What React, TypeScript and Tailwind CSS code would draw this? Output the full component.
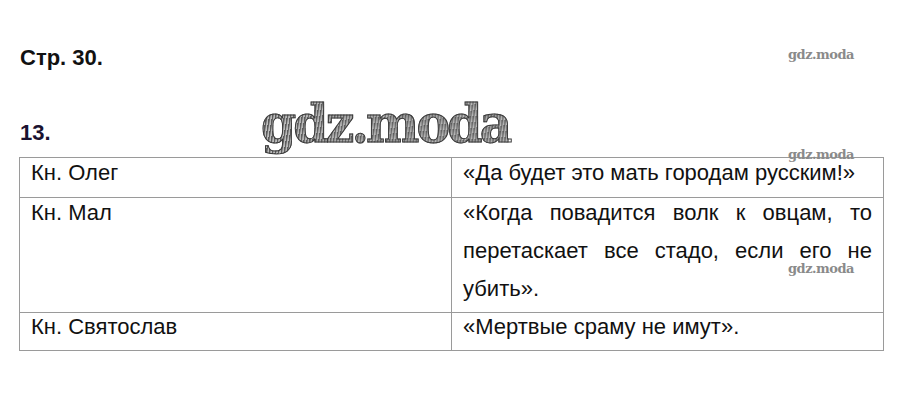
export default function App() {
  const cell = "border border-[#9a9a9a] align-top px-[11px] text-[22px] leading-[38px] text-[#111]";
  const mark = "absolute font-['DejaVu_Serif',serif] font-bold text-[13px] tracking-[-0.5px] text-[#8a8a8a] select-none";

  return (
    <div className="relative w-[897px] h-[402px] bg-white font-['Liberation_Sans',Arial,sans-serif] text-[#111] overflow-hidden">
      <div className="px-[20px] pt-[44px]">
        <p className="text-[22px] font-bold leading-[28px]">Стр. 30.</p>
        <p className="mt-[47px] text-[22px] font-bold leading-[28px] text-[#1a1230]">13.</p>

        <table className="mt-[10px] ml-[-1px] w-[865px] border-collapse table-fixed">
          <colgroup>
            <col className="w-[432px]" />
            <col />
          </colgroup>
          <tbody>
            <tr className="border-b border-b-[#222]">
              <td className={cell}>
                <div className="-mt-[4px] mb-[5px]">Кн. Олег</div>
              </td>
              <td className={cell}>
                <div className="-mt-[4px] mb-[5px]">«Да будет это мать городам русским!»</div>
              </td>
            </tr>
            <tr>
              <td className={cell}>
                <div className="-mt-[4px] mb-[4px]">Кн. Мал</div>
              </td>
              <td className={cell}>
                <div className="-mt-[4px] mb-[4px]">
                  <div className="text-justify [text-align-last:justify]">«Когда повадится волк к овцам, то</div>
                  <div className="text-justify [text-align-last:justify]">перетаскает все стадо, если его не</div>
                  <div>убить».</div>
                </div>
              </td>
            </tr>
            <tr>
              <td className={cell}>
                <div className="-mt-[5px] mb-[4px]">Кн. Святослав</div>
              </td>
              <td className={cell}>
                <div className="-mt-[5px] mb-[4px]">«Мертвые сраму не имут».</div>
              </td>
            </tr>
          </tbody>
        </table>
      </div>

      {/* watermarks */}
      <div className="absolute left-[261px] top-[94px] origin-left scale-x-[0.97] font-['DejaVu_Serif',serif] font-bold text-[52px] leading-[60px] tracking-[-3px] text-transparent bg-[repeating-linear-gradient(100deg,#5a5a5a_0px,#5a5a5a_1px,#bdbdbd_2px,#bdbdbd_3px)] bg-clip-text [-webkit-text-stroke:1px_#3a3a3a] select-none">
        gdz.moda
      </div>
      <div className={`${mark} left-[788px] top-[45px]`}>gdz.moda</div>
      <div className={`${mark} left-[788px] top-[145px]`}>gdz.moda</div>
      <div className={`${mark} left-[788px] top-[259px]`}>gdz.moda</div>
    </div>
  );
}
